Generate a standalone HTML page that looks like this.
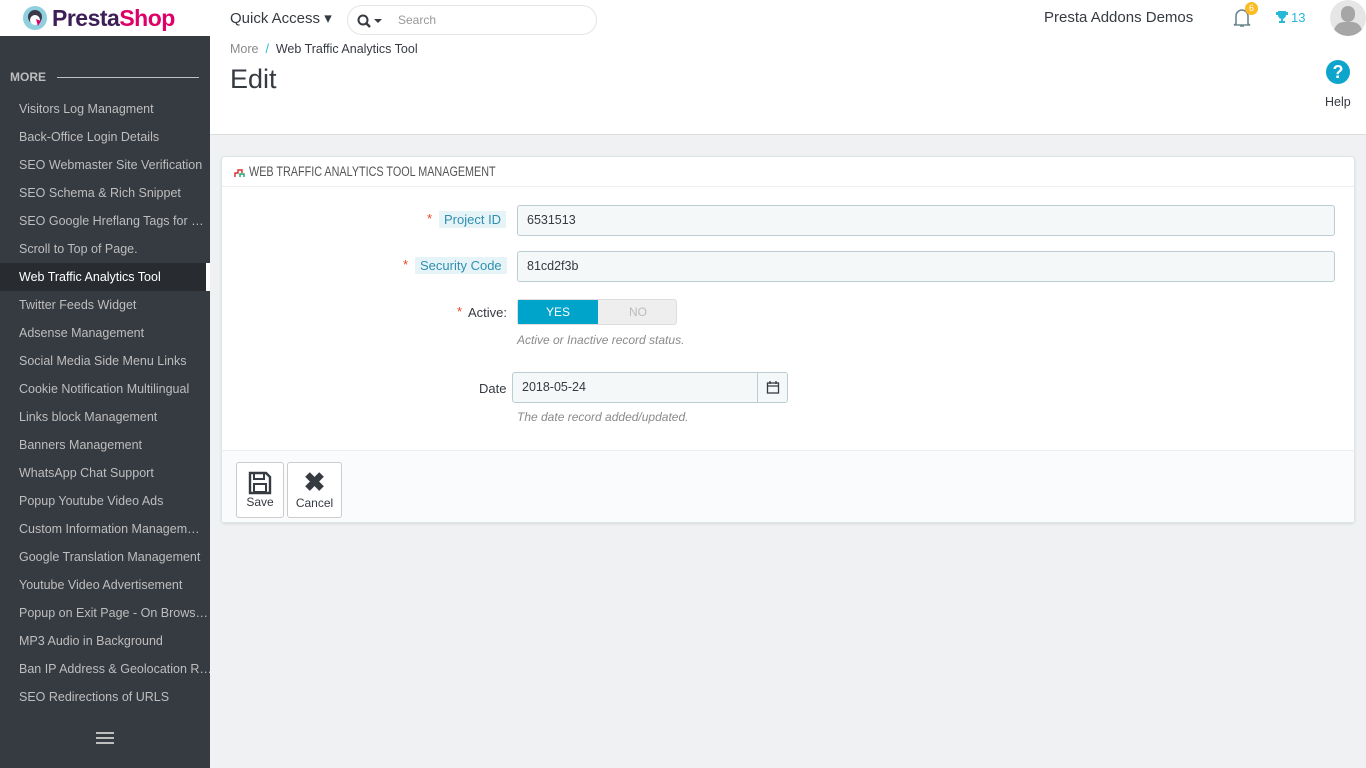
<!DOCTYPE html>
<html><head><meta charset="utf-8"><style>
*{box-sizing:border-box;margin:0;padding:0}
body{width:1366px;height:768px;overflow:hidden;background:#eff1f2;font-family:"Liberation Sans",sans-serif;font-size:13px;color:#363a41;position:relative}
.top{position:absolute;left:0;top:0;width:1366px;height:36px;background:#fff}
.side{position:absolute;left:0;top:36px;width:210px;height:732px;background:#363a41}
.side .more{position:absolute;left:10px;top:34px;color:#bebebe;font-weight:bold;font-size:12px}
.side .line{position:absolute;left:57px;top:41px;width:142px;height:1px;background:#bebebe}
.side .it{position:absolute;left:0;width:210px;height:28px;line-height:28px;padding-left:19px;color:#bebebe;font-size:12.5px;white-space:nowrap;overflow:hidden;margin-top:1px}
.side .act{background:#282b30;color:#fff;border-right:4px solid #fff}
.ph{position:absolute;left:210px;top:36px;width:1156px;height:99px;background:#fff;border-bottom:1px solid #dcdcdc}
.panel{position:absolute;left:221px;top:156px;width:1134px;height:367px;background:#fff;border:1px solid #dbe6e9;border-radius:4px;box-shadow:0 1px 2px rgba(0,0,0,.1)}
.ab{position:absolute}
.inp{position:absolute;background:#f5f8f9;border:1px solid #bbcdd2;border-radius:3px;height:31px;line-height:29px;padding-left:9px;font-size:12.5px}
.lbl{position:absolute;background:#e6f4f8;padding:1px 5px;font-size:13px;color:#2f8fb0}
.req{color:#e42;position:absolute}
.hint{position:absolute;font-style:italic;color:#8a8a8a;font-size:12px}
.btn{position:absolute;top:305px;height:56px;border:1px solid #ccc;border-radius:3px;background:#fff;text-align:center;font-size:12px}
</style></head><body>
<div class="top">
 <svg class="ab" style="left:22px;top:5px" width="26" height="26"><circle cx="13" cy="13" r="12" fill="#8fd0de"/><circle cx="13" cy="12" r="7" fill="#3a3a4a"/><circle cx="13" cy="15" r="5" fill="#fff"/><path d="M14 14l5 2-3 5z" fill="#df0067"/></svg>
 <div class="ab" style="left:52px;top:5px;font-size:23px;font-weight:bold;letter-spacing:-0.5px"><span style="color:#3d1e56">Presta</span><span style="color:#df0067">Shop</span></div>
 <div class="ab" style="left:230px;top:9px;font-size:15px">Quick Access ▾</div>
 <div class="ab" style="left:347px;top:5px;width:250px;height:30px;border:1px solid #e5e5e5;border-radius:15px">
  <svg class="ab" style="left:9px;top:8px" width="28" height="14"><circle cx="6" cy="6" r="4.5" fill="none" stroke="#363a41" stroke-width="2"/><path d="M9 9l4 4" stroke="#363a41" stroke-width="2.4"/><path d="M17 5h8l-4 4z" fill="#363a41"/></svg>
  <span class="ab" style="left:50px;top:7px;color:#999;font-size:12px">Search</span></div>
 <div class="ab" style="left:1044px;top:9px;font-size:15px">Presta Addons Demos</div>
 <svg class="ab" style="left:1232px;top:7px" width="20" height="22"><path d="M4 17V9a6 6 0 0 1 12 0v8l2 1H2z M8 19h4" fill="none" stroke="#6c868e" stroke-width="1.6"/></svg>
 <div class="ab" style="left:1245px;top:2px;width:13px;height:13px;border-radius:7px;background:#fbbb22;color:#fff;font-size:9px;text-align:center;line-height:13px">6</div>
 <svg class="ab" style="left:1275px;top:10px" width="14" height="14"><path d="M3 1h8v4a4 4 0 0 1-8 0z M1 2h2v3H1z M11 2h2v3h-2z M6 9h2v2H6z M4 11h6v2H4z" fill="#25b9d7"/></svg>
 <div class="ab" style="left:1291px;top:10px;color:#25b9d7;font-size:13px">13</div>
 <div class="ab" style="left:1330px;top:0;width:36px;height:36px;border-radius:18px;background:#e6e6e6;overflow:hidden"><div class="ab" style="left:11px;top:6px;width:14px;height:16px;border-radius:7px;background:#a6a6a6"></div><div class="ab" style="left:4px;top:22px;width:28px;height:20px;border-radius:12px;background:#a6a6a6"></div></div>
</div>
<div class="side">
 <div class="more">MORE</div><div class="line"></div>
 <div class="it" style="top:58px">Visitors Log Managment</div>
 <div class="it" style="top:86px">Back-Office Login Details</div>
 <div class="it" style="top:114px">SEO Webmaster Site Verification</div>
 <div class="it" style="top:142px">SEO Schema &amp; Rich Snippet</div>
 <div class="it" style="top:170px">SEO Google Hreflang Tags for …</div>
 <div class="it" style="top:198px">Scroll to Top of Page.</div>
 <div class="it act" style="top:226px">Web Traffic Analytics Tool</div>
 <div class="it" style="top:254px">Twitter Feeds Widget</div>
 <div class="it" style="top:282px">Adsense Management</div>
 <div class="it" style="top:310px">Social Media Side Menu Links</div>
 <div class="it" style="top:338px">Cookie Notification Multilingual</div>
 <div class="it" style="top:366px">Links block Management</div>
 <div class="it" style="top:394px">Banners Management</div>
 <div class="it" style="top:422px">WhatsApp Chat Support</div>
 <div class="it" style="top:450px">Popup Youtube Video Ads</div>
 <div class="it" style="top:478px">Custom Information Managem…</div>
 <div class="it" style="top:506px">Google Translation Management</div>
 <div class="it" style="top:534px">Youtube Video Advertisement</div>
 <div class="it" style="top:562px">Popup on Exit Page - On Brows…</div>
 <div class="it" style="top:590px">MP3 Audio in Background</div>
 <div class="it" style="top:618px">Ban IP Address &amp; Geolocation R…</div>
 <div class="it" style="top:646px">SEO Redirections of URLS</div>
 <div class="ab" style="left:96px;top:701px;width:18px;height:2px;background:#bebebe;box-shadow:0 -5px 0 #bebebe,0 5px 0 #bebebe"></div>
</div>
<div class="ph">
 <div class="ab" style="left:20px;top:6px;font-size:12.5px"><span style="color:#8a8a8a">More</span> <span style="color:#25b9d7">&nbsp;/&nbsp;</span> Web Traffic Analytics Tool</div>
 <div class="ab" style="left:20px;top:28px;font-size:27px">Edit</div>
 <div class="ab" style="left:1116px;top:24px;width:24px;height:24px;border-radius:12px;background:#0ea5cc;color:#fff;font-weight:bold;font-size:18px;text-align:center;line-height:24px">?</div>
 <div class="ab" style="left:1115px;top:59px;font-size:12.5px">Help</div>
</div>
<div class="panel">
 <div class="ab" style="left:0;top:0;width:1132px;height:30px;border-bottom:1px solid #eee"></div>
 <svg class="ab" style="left:12px;top:11px" width="12" height="10"><path d="M1 9V5h3V2h4v3" fill="none" stroke="#d33" stroke-width="1.5"/><path d="M6 9V6h4v3" fill="none" stroke="#2a7" stroke-width="1.5"/></svg>
 <div class="ab" style="left:27px;top:7px;font-size:13.5px;color:#555;transform:scaleX(0.8);transform-origin:0 0;white-space:nowrap">WEB TRAFFIC ANALYTICS TOOL MANAGEMENT</div>
 <span class="req" style="left:205px;top:54px">*</span><span class="lbl" style="left:217px;top:54px">Project ID</span>
 <div class="inp" style="left:295px;top:48px;width:818px">6531513</div>
 <span class="req" style="left:181px;top:100px">*</span><span class="lbl" style="left:193px;top:100px">Security Code</span>
 <div class="inp" style="left:295px;top:94px;width:818px">81cd2f3b</div>
 <span class="req" style="left:235px;top:147px">*</span><span class="ab" style="left:246px;top:148px">Active:</span>
 <div class="ab" style="left:295px;top:142px;width:160px;height:26px;border-radius:3px;background:#eee;border:1px solid #ddd"><div class="ab" style="left:0;top:0;width:80px;height:24px;background:#00a4cb;color:#fff;text-align:center;line-height:24px;font-size:12px">YES</div><div class="ab" style="left:80px;top:0;width:80px;line-height:24px;text-align:center;color:#bbb;font-size:12px">NO</div></div>
 <div class="hint" style="left:295px;top:176px">Active or Inactive record status.</div>
 <span class="ab" style="left:257px;top:224px">Date</span>
 <div class="inp" style="left:290px;top:215px;width:276px;padding-right:0">2018-05-24<div class="ab" style="right:0;top:0;width:30px;height:29px;border-left:1px solid #bbcdd2;text-align:center"><svg width="14" height="14" style="margin-top:7px"><rect x="1.5" y="3" width="11" height="10" fill="none" stroke="#363a41" stroke-width="1.3"/><path d="M1.5 6h11M4 1v3M10 1v3" stroke="#363a41" stroke-width="1.3"/></svg></div></div>
 <div class="hint" style="left:295px;top:253px">The date record added/updated.</div>
 <div class="ab" style="left:0;top:293px;width:1132px;height:72px;background:#fafbfc;border-top:1px solid #eee"></div>
 <div class="btn" style="left:14px;width:48px"><svg width="26" height="26" style="margin-top:7px"><path d="M3 3h16l4 4v16H3z" fill="none" stroke="#363a41" stroke-width="2.4"/><rect x="7" y="3" width="10" height="6" fill="none" stroke="#363a41" stroke-width="2"/><rect x="7" y="14" width="12" height="8" fill="none" stroke="#363a41" stroke-width="2"/></svg><div style="margin-top:-4px">Save</div></div>
 <div class="btn" style="left:65px;width:55px"><div style="font-size:26px;font-weight:bold;line-height:28px;margin-top:5px">✖</div><div>Cancel</div></div>
</div>
</body></html>
